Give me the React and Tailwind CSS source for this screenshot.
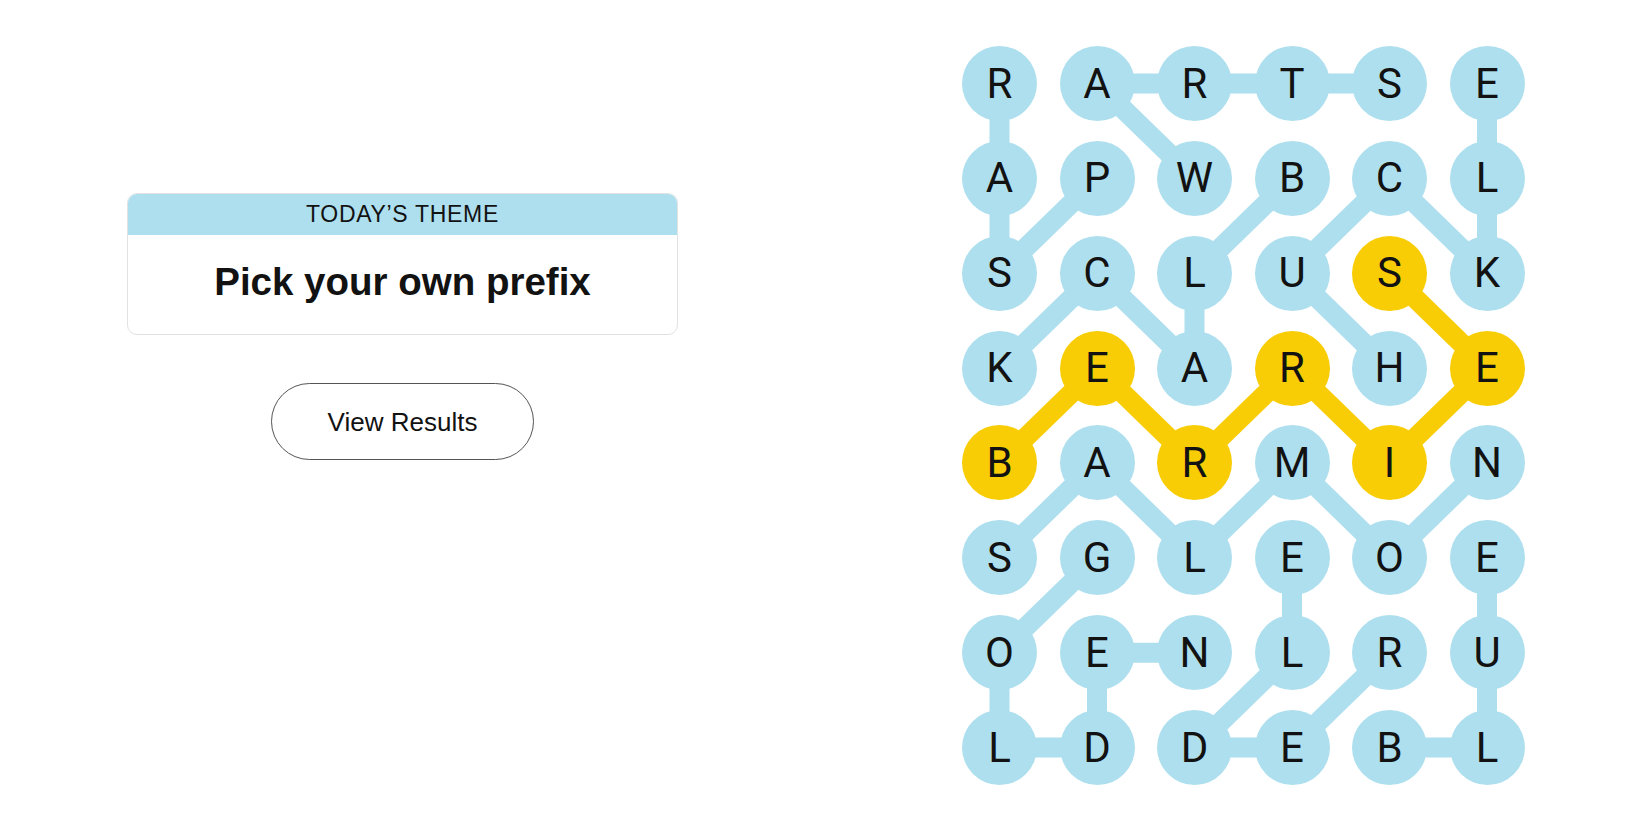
import React from "react";

const GRID = [
  "RARTSE",
  "APWBCL",
  "SCLUSK",
  "KEARHE",
  "BARMIN",
  "SGLEOE",
  "OENLRU",
  "LDDEBL",
];

const YELLOW = [
  [4, 0],
  [3, 1],
  [4, 2],
  [3, 3],
  [4, 4],
  [3, 5],
  [2, 4],
];

const BLUE_LINKS = [
  [[0, 0], [1, 0]],
  [[1, 0], [2, 0]],
  [[1, 1], [2, 0]],
  [[0, 1], [0, 2]],
  [[0, 2], [0, 3]],
  [[0, 3], [0, 4]],
  [[0, 1], [1, 2]],
  [[0, 5], [1, 5]],
  [[1, 5], [2, 5]],
  [[1, 3], [2, 2]],
  [[1, 4], [2, 3]],
  [[1, 4], [2, 5]],
  [[2, 3], [3, 4]],
  [[2, 1], [3, 0]],
  [[2, 1], [3, 2]],
  [[2, 2], [3, 2]],
  [[4, 1], [5, 0]],
  [[4, 1], [5, 2]],
  [[5, 2], [4, 3]],
  [[4, 3], [5, 4]],
  [[4, 5], [5, 4]],
  [[5, 1], [6, 0]],
  [[5, 3], [6, 3]],
  [[5, 5], [6, 5]],
  [[6, 5], [7, 5]],
  [[7, 4], [7, 5]],
  [[6, 4], [7, 3]],
  [[6, 3], [7, 2]],
  [[7, 2], [7, 3]],
  [[6, 0], [7, 0]],
  [[7, 0], [7, 1]],
  [[6, 1], [7, 1]],
  [[6, 1], [6, 2]],
];

const CW = 97.5;
const RH = 94.86;
const R = 37.5;
const cx = (c) => R + c * CW;
const cy = (r) => R + r * RH;

const isYellow = (r, c) => YELLOW.some(([yr, yc]) => yr === r && yc === c);

export default function App() {
  const yellowLinks = YELLOW.slice(1).map((p, i) => [YELLOW[i], p]);
  return (
    <div className="flex items-start w-[1650px] h-[825px] bg-white overflow-hidden">
      <div className="ml-[127px] mt-[193px] w-[551px] flex flex-col items-center">
        <div className="w-full rounded-[10px] border border-[#e2e2e2] overflow-hidden">
          <div className="h-[41px] bg-[#aedfee] flex items-center justify-center">
            <span className="text-[23px] leading-none tracking-[0.03em] text-[#121212] font-['Liberation_Sans',sans-serif]">
              TODAY’S THEME
            </span>
          </div>
          <div className="h-[99px] flex items-center justify-center pb-[4px]">
            <span className="text-[38.5px] leading-none font-bold text-[#121212] font-['Liberation_Sans',sans-serif]">
              Pick your own prefix
            </span>
          </div>
        </div>
        <button className="mt-[48px] w-[263px] h-[77px] rounded-full border border-[#555] bg-white flex items-center justify-center">
          <span className="text-[26px] leading-none text-[#121212] font-['Liberation_Sans',sans-serif]">
            View Results
          </span>
        </button>
      </div>
      <div className="ml-[284px] mt-[46px] relative w-[562.5px] h-[739px]">
        <svg
          className="absolute inset-0"
          width="562.5"
          height="739"
          viewBox="0 0 562.5 739"
        >
          {BLUE_LINKS.map(([a, b], i) => (
            <line
              key={"b" + i}
              x1={cx(a[1])}
              y1={cy(a[0])}
              x2={cx(b[1])}
              y2={cy(b[0])}
              stroke="#aedfee"
              strokeWidth="20"
            />
          ))}
          {yellowLinks.map(([a, b], i) => (
            <line
              key={"y" + i}
              x1={cx(a[1])}
              y1={cy(a[0])}
              x2={cx(b[1])}
              y2={cy(b[0])}
              stroke="#f8cd05"
              strokeWidth="20"
            />
          ))}
        </svg>
        <div className="relative grid grid-cols-[repeat(6,75px)] grid-rows-[repeat(8,75px)] gap-x-[22.5px] gap-y-[19.86px]">
          {GRID.map((row, r) =>
            row.split("").map((ch, c) => (
              <div
                key={r + "-" + c}
                className={
                  "w-[75px] h-[75px] rounded-full flex items-center justify-center " +
                  (isYellow(r, c) ? "bg-[#f8cd05]" : "bg-[#aedfee]")
                }
              >
                <span className="text-[42px] leading-none text-[#121212] font-['Roboto',sans-serif]">
                  {ch}
                </span>
              </div>
            ))
          )}
        </div>
      </div>
    </div>
  );
}
